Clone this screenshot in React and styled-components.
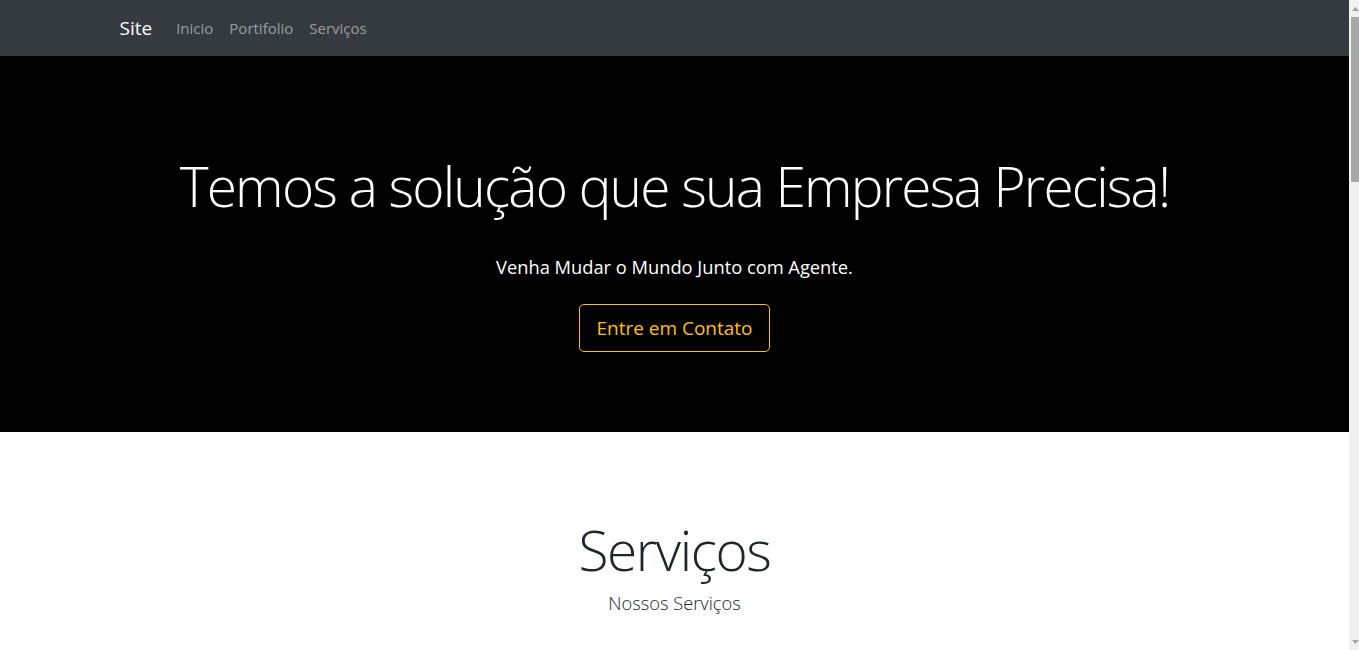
import React from 'react';
import styled, { createGlobalStyle } from 'styled-components';

const GlobalStyle = createGlobalStyle`
  html, body {
    margin: 0;
    padding: 0;
    overflow: hidden;
  }
  body {
    font-family: "Open Sans", "Noto Sans", sans-serif;
    color: #212529;
    background: #fff;
  }
  * {
    box-sizing: border-box;
  }
`;

const Page = styled.div`
  display: flex;
  height: 650px;
  overflow: hidden;
`;

const Main = styled.main`
  flex: 1;
  min-width: 0;
  overflow: hidden;
`;

const Container = styled.div`
  max-width: 1140px;
  margin: 0 auto;
  padding: 0 15px;
`;

const NavBar = styled.nav`
  background-color: #343a40;
  height: 56px;
`;

const NavContent = styled(Container)`
  display: flex;
  align-items: center;
  height: 100%;
`;

const Brand = styled.a`
  color: #fff;
  font-size: 19px;
  margin-right: 16px;
  text-decoration: none;
  padding-bottom: 1px;
`;

const NavList = styled.ul`
  display: flex;
  list-style: none;
  margin: 0;
  padding: 0;
`;

const NavItem = styled.li`
  a {
    display: block;
    padding: 8px 8px;
    color: rgba(255, 255, 255, 0.5);
    font-size: 15px;
    text-decoration: none;
  }
`;

const Hero = styled.section`
  background-color: #000;
  color: #fff;
  height: 376px;
  padding-top: 97px;
  text-align: center;
`;

const Display = styled.h1`
  margin: 0;
  font-weight: 300;
  font-size: 55px;
  line-height: 1.2;
  letter-spacing: ${p => p.spacing || -1.4}px;
`;

const Lead = styled.p`
  margin: ${p => p.top || 0}px 0 0;
  font-size: 18.3px;
  font-weight: ${p => p.weight || 400};
  line-height: 1.5;
`;

const OutlineButton = styled.a`
  display: inline-block;
  margin-top: 24px;
  height: 48px;
  padding: 0 16px;
  line-height: 46px;
  font-size: 19px;
  color: #ffc107;
  border: 1px solid #ffc107;
  border-radius: 5px;
  text-decoration: none;
`;

const Section = styled.section`
  padding-top: 85px;
  text-align: center;
`;

const Scrollbar = styled.div`
  width: 10px;
  height: 650px;
  background: #f1f1f1;
  display: flex;
  flex-direction: column;
  align-items: flex-end;
`;

const Arrow = styled.div`
  width: 8px;
  height: 17px;
  display: flex;
  align-items: center;
  justify-content: center;
`;

const Thumb = styled.div`
  width: 8px;
  height: 165px;
  background: #a8a8a8;
`;

const Spacer = styled.div`
  flex: 1;
`;

const ArrowIcon = ({ down }) => (
  <svg width="7" height="4" viewBox="0 0 7 4">
    <polygon points={down ? '0,0 7,0 3.5,4' : '0,4 7,4 3.5,0'} fill="#a3a3a3" />
  </svg>
);

export default function App() {
  return (
    <Page>
      <GlobalStyle />
      <Main>
        <NavBar>
          <NavContent>
            <Brand href="#">Site</Brand>
            <NavList>
              <NavItem><a href="#">Inicio</a></NavItem>
              <NavItem><a href="#">Portifolio</a></NavItem>
              <NavItem><a href="#">Serviços</a></NavItem>
            </NavList>
          </NavContent>
        </NavBar>
        <Hero>
          <Display spacing={-1.8}>Temos a solução que sua Empresa Precisa!</Display>
          <Lead top={34}>Venha Mudar o Mundo Junto com Agente.</Lead>
          <OutlineButton href="#">Entre em Contato</OutlineButton>
        </Hero>
        <Section>
          <Display>Serviços</Display>
          <Lead top={6} weight={300}>Nossos Serviços</Lead>
        </Section>
      </Main>
      <Scrollbar>
        <Arrow><ArrowIcon /></Arrow>
        <Thumb />
        <Spacer />
        <Arrow><ArrowIcon down /></Arrow>
      </Scrollbar>
    </Page>
  );
}
